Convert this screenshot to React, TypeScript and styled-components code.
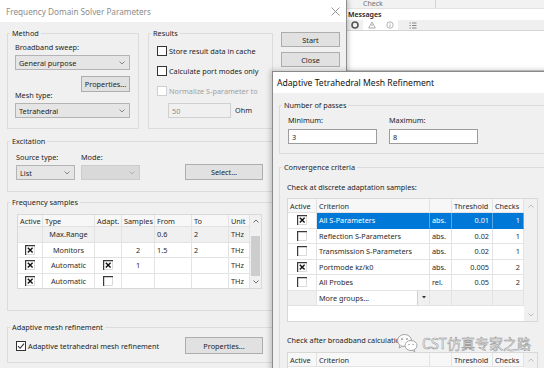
import React from "react";
import styled, { createGlobalStyle } from "styled-components";

const GlobalStyle = createGlobalStyle`
  html, body { margin: 0; padding: 0; background: #ffffff; }
  body {
    font-family: "Noto Sans", "Open Sans", "Liberation Sans", sans-serif;
    font-size: 7.3px;
    color: #1e1e1e;
  }
  *, *::before, *::after { box-sizing: border-box; }
`;

const Desktop = styled.div`
  position: relative;
  width: 544px;
  height: 368px;
  overflow: hidden;
  background: #ffffff;
`;

type WinProps = { $x: number; $y: number; $w: number; $h: number; $z: number };

const Window = styled.div<WinProps>`
  position: absolute;
  left: ${(p) => p.$x}px;
  top: ${(p) => p.$y}px;
  width: ${(p) => p.$w}px;
  height: ${(p) => p.$h}px;
  z-index: ${(p) => p.$z};
  display: flex;
  flex-direction: column;
  background: #f0f0f0;
`;

const SolverWindow = styled(Window)`
  border-right: 1px solid #8e8e8e;
  box-shadow: 2px 0 4px rgba(0, 0, 0, 0.18);
`;

const MeshWindow = styled(Window)`
  border-left: 1px solid #8a8a8a;
  border-top: 1px solid #8a8a8a;
  box-shadow: -2px -1px 5px rgba(0, 0, 0, 0.2);
`;

const MessagesWindow = styled(Window)`
  background: #ffffff;
  border-bottom: 2px solid #cfcfcf;
`;

const TitleBar = styled.div<{ $h: number; $pl: number; $pr?: number }>`
  flex: none;
  height: ${(p) => p.$h}px;
  background: #ffffff;
  display: flex;
  align-items: center;
  justify-content: space-between;
  padding: 0 ${(p) => p.$pr ?? 0}px 0 ${(p) => p.$pl}px;
`;

const TitleText = styled.span<{ $active: boolean }>`
  font-size: ${(p) => (p.$active ? 8.6 : 8.2)}px;
  color: ${(p) => (p.$active ? "#111111" : "#8c8c8c")};
  white-space: nowrap;
`;

const DialogBody = styled.div<{ $pt: number; $pl: number }>`
  flex: 1;
  display: flex;
  flex-direction: column;
  align-items: flex-start;
  padding: ${(p) => p.$pt}px 0 0 ${(p) => p.$pl}px;
`;

const Row = styled.div<{ $gap?: number; $mt?: number; $ml?: number; $align?: string; $justify?: string; $h?: number; $w?: number }>`
  display: flex;
  flex: none;
  gap: ${(p) => p.$gap ?? 0}px;
  margin-top: ${(p) => p.$mt ?? 0}px;
  margin-left: ${(p) => p.$ml ?? 0}px;
  align-items: ${(p) => p.$align ?? "flex-start"};
  justify-content: ${(p) => p.$justify ?? "flex-start"};
  ${(p) => (p.$h ? `height: ${p.$h}px;` : "")}
  ${(p) => (p.$w ? `width: ${p.$w}px;` : "")}
`;

const Column = styled.div<{ $gap?: number; $ml?: number; $align?: string }>`
  display: flex;
  flex-direction: column;
  gap: ${(p) => p.$gap ?? 0}px;
  margin-left: ${(p) => p.$ml ?? 0}px;
  align-items: ${(p) => p.$align ?? "flex-start"};
`;

const Group = styled.fieldset<{ $w: number; $mt?: number; $ml?: number; $h?: number }>`
  margin: ${(p) => p.$mt ?? 0}px 0 0 ${(p) => p.$ml ?? 0}px;
  padding: 0;
  min-width: 0;
  width: ${(p) => p.$w}px;
  ${(p) => (p.$h ? `height: ${p.$h}px;` : "")}
  border: 1px solid #dcdcdc;
  flex: none;
`;

const Legend = styled.legend`
  margin-left: 2px;
  padding: 0 2px;
  height: 12px;
  line-height: 12px;
  font-size: 7.3px;
  color: #1e1e1e;
`;

const GroupBody = styled.div<{ $pad: string }>`
  padding: ${(p) => p.$pad};
  display: flex;
  flex-direction: column;
  align-items: flex-start;
`;

const FieldLabel = styled.div<{ $mt?: number }>`
  height: 12px;
  line-height: 12px;
  margin-top: ${(p) => p.$mt ?? 0}px;
  white-space: nowrap;
`;

const ComboBox = styled.div<{ $w: number; $disabled?: boolean; $mt?: number }>`
  width: ${(p) => p.$w}px;
  height: 15px;
  margin-top: ${(p) => p.$mt ?? 2}px;
  display: flex;
  align-items: center;
  justify-content: space-between;
  padding: 0 4px 0 3px;
  background: ${(p) => (p.$disabled ? "#d9d9d9" : "#e5e5e5")};
  border: 1px solid ${(p) => (p.$disabled ? "#cccccc" : "#b4b4b4")};
  white-space: nowrap;
`;

const PushButton = styled.button<{ $w: number; $h?: number; $ml?: number }>`
  width: ${(p) => p.$w}px;
  height: ${(p) => p.$h ?? 16}px;
  margin: 0 0 0 ${(p) => p.$ml ?? 0}px;
  padding: 0;
  font: inherit;
  color: #1e1e1e;
  background: #e1e1e1;
  border: 1px solid #adadad;
  border-radius: 0;
  display: flex;
  align-items: center;
  justify-content: center;
  white-space: nowrap;
  flex: none;
`;

const ButtonColumn = styled.div<{ $ml: number }>`
  display: flex;
  flex-direction: column;
  gap: 5px;
  margin: 5px 0 0 ${(p) => p.$ml}px;
`;

const CheckRow = styled.div<{ $h: number; $w?: number }>`
  display: flex;
  align-items: center;
  gap: 2px;
  height: ${(p) => p.$h}px;
  ${(p) => (p.$w ? `width: ${p.$w}px;` : "")}
  flex: none;
`;

const Box = styled.span<{ $disabled?: boolean }>`
  width: 10px;
  height: 10px;
  flex: none;
  display: inline-flex;
  align-items: center;
  justify-content: center;
  background: #ffffff;
  border: 1px solid ${(p) => (p.$disabled ? "#cfcfcf" : "#333333")};
`;

const CheckText = styled.span<{ $disabled?: boolean }>`
  white-space: nowrap;
  color: ${(p) => (p.$disabled ? "#a0a0a0" : "#1e1e1e")};
`;

const TextField = styled.div<{ $w: number; $disabled?: boolean; $mt?: number; $ml?: number }>`
  width: ${(p) => p.$w}px;
  height: 15px;
  margin: ${(p) => p.$mt ?? 0}px 0 0 ${(p) => p.$ml ?? 0}px;
  padding-left: 3px;
  display: flex;
  align-items: center;
  background: ${(p) => (p.$disabled ? "#f0f0f0" : "#ffffff")};
  border: 1px solid ${(p) => (p.$disabled ? "#d0d0d0" : "#9c9c9c")};
  color: ${(p) => (p.$disabled ? "#8d8d8d" : "#1e1e1e")};
  flex: none;
`;

const UnitText = styled.span`
  margin-left: 4px;
  line-height: 15px;
`;

/* ---------- tables ---------- */

const TableFrame = styled.div<{ $w: number; $h: number; $mt?: number }>`
  display: flex;
  flex: none;
  width: ${(p) => p.$w}px;
  height: ${(p) => p.$h}px;
  margin-top: ${(p) => p.$mt ?? 0}px;
  border: 1px solid #d8d8d8;
  background: #ffffff;
  overflow: hidden;
`;

const DataGrid = styled.div<{ $cols: string; $head: number; $row: number }>`
  flex: 1;
  display: grid;
  grid-template-columns: ${(p) => p.$cols};
  grid-template-rows: ${(p) => p.$head}px;
  grid-auto-rows: ${(p) => p.$row}px;
  align-content: start;
`;

type Tone = "white" | "gray" | "sel" | "head";
type Align = "left" | "center" | "right";

const toneBg: Record<Tone, string> = {
  white: "#ffffff",
  gray: "#f0f0f0",
  sel: "#0078d7",
  head: "#f7f7f7",
};

const Cell = styled.div<{ $align?: Align; $tone?: Tone; $pad?: number }>`
  display: flex;
  align-items: center;
  min-width: 0;
  overflow: hidden;
  white-space: nowrap;
  justify-content: ${(p) =>
    p.$align === "center" ? "center" : p.$align === "right" ? "flex-end" : "flex-start"};
  padding: 0 ${(p) => p.$pad ?? (p.$align === "right" ? 3 : 2)}px;
  background: ${(p) => toneBg[p.$tone ?? "white"]};
  color: ${(p) => (p.$tone === "sel" ? "#ffffff" : "#2a2a2a")};
  border-right: 1px solid ${(p) => (p.$tone === "sel" ? "rgba(255,255,255,0.35)" : "#e3e3e3")};
  border-bottom: 1px solid ${(p) => (p.$tone === "sel" ? "#0078d7" : "#e3e3e3")};
`;

const ScrollTrack = styled.div<{ $w: number }>`
  flex: none;
  width: ${(p) => p.$w}px;
  background: #f0f0f0;
  display: flex;
  flex-direction: column;
`;

const ScrollButton = styled.div<{ $h: number }>`
  flex: none;
  height: ${(p) => p.$h}px;
  display: flex;
  align-items: center;
  justify-content: center;
`;

const ScrollSpace = styled.div<{ $h?: number }>`
  flex: ${(p) => (p.$h ? "none" : "1")};
  height: ${(p) => (p.$h ? `${p.$h}px` : "auto")};
`;

const ScrollThumb = styled.div<{ $h: number }>`
  flex: none;
  height: ${(p) => p.$h}px;
  margin: 0 1px;
  background: #cdcdcd;
`;

const MiniCombo = styled.div`
  flex: 1;
  display: flex;
  height: 100%;
  background: #ffffff;
`;

const MiniComboText = styled.span`
  flex: 1;
  display: flex;
  align-items: center;
  padding-left: 2px;
`;

const MiniComboButton = styled.span`
  width: 12px;
  flex: none;
  display: flex;
  align-items: center;
  justify-content: center;
  background: #f0f0f0;
  border-left: 1px solid #d0d0d0;
`;

/* ---------- background messages app ---------- */

const CheckHeader = styled.div`
  flex: none;
  height: 9px;
  display: flex;
  background: #f2f2f2;
  border-bottom: 1px solid #e2e2e2;
  overflow: hidden;
`;

const CheckCell = styled.div<{ $w: number }>`
  width: ${(p) => p.$w}px;
  padding-left: 16px;
  border-right: 1px solid #d3d3d3;
  display: flex;
  align-items: center;
  font-size: 7px;
  line-height: 8px;
  color: #707070;
`;

const PaneTitle = styled.div`
  flex: none;
  height: 11px;
  line-height: 12px;
  padding-left: 1px;
  font-size: 7px;
  font-weight: 600;
  color: #222222;
`;

const MsgToolbar = styled.div`
  flex: none;
  height: 11px;
  display: flex;
  background: #f0f0f0;
  border-bottom: 1px solid #d4d4d4;
`;

const IconSlot = styled.div<{ $w: number; $light?: boolean }>`
  width: ${(p) => p.$w}px;
  display: flex;
  align-items: center;
  justify-content: center;
  background: ${(p) => (p.$light ? "#ffffff" : "transparent")};
`;

const MsgList = styled.div`
  flex: 1;
  background: #ffffff;
`;

/* ---------- watermark ---------- */

const Watermark = styled.div`
  position: absolute;
  left: 396px;
  top: 333px;
  z-index: 20;
  display: flex;
  align-items: center;
  gap: 4px;
  pointer-events: none;
`;

const WatermarkText = styled.span`
  font-family: "Noto Sans CJK SC", "Noto Sans", sans-serif;
  font-size: 14px;
  line-height: 20px;
  color: rgba(255, 255, 255, 0.85);
  -webkit-text-stroke: 0.5px #8f8f8f;
  white-space: nowrap;
`;

/* ---------- small drawings ---------- */

const Chevron = ({ color = "#7a7a7a", up = false }: { color?: string; up?: boolean }) => (
  <svg width="6" height="4" viewBox="0 0 6 4">
    <path
      d={up ? "M0.5 3.5 L3 1 L5.5 3.5" : "M0.5 0.5 L3 3 L5.5 0.5"}
      fill="none"
      stroke={color}
      strokeWidth="0.9"
    />
  </svg>
);

const CloseGlyph = () => (
  <svg width="9" height="9" viewBox="0 0 9 9">
    <path d="M0.5 0.5 L8.5 8.5 M8.5 0.5 L0.5 8.5" stroke="#8c8c8c" strokeWidth="0.9" />
  </svg>
);

const TableCheck = ({ checked }: { checked: boolean }) => (
  <svg width="10" height="10" viewBox="0 0 10 10">
    <rect x="0" y="0" width="10" height="10" fill="#ffffff" />
    <path d="M1 9.5 H9.5 V1" stroke="#dadada" fill="none" strokeWidth="1" />
    <path d="M0.6 10 V0.6 H10" fill="none" stroke="#3a3a3a" strokeWidth="1.2" />
    {checked && <path d="M2.8 2.8 L7.6 7.6 M7.6 2.8 L2.8 7.6" stroke="#111111" strokeWidth="1.4" />}
  </svg>
);

const TickMark = () => (
  <svg width="8" height="8" viewBox="0 0 8 8">
    <path d="M1 4.2 L3.1 6.3 L7 1.6" fill="none" stroke="#333333" strokeWidth="1.1" />
  </svg>
);

const DropTriangle = () => (
  <svg width="4" height="3" viewBox="0 0 4 3">
    <path d="M0 0 H4 L2 2.5 Z" fill="#333333" />
  </svg>
);

const ErrorIcon = () => (
  <svg width="8" height="8" viewBox="0 0 8 8">
    <circle cx="4" cy="4" r="3" fill="none" stroke="#555555" strokeWidth="1.6" />
  </svg>
);

const WarnIcon = () => (
  <svg width="8" height="8" viewBox="0 0 8 8">
    <path d="M4 1 L7.3 7 H0.7 Z" fill="none" stroke="#9a9a9a" strokeWidth="0.8" />
    <path d="M4 3 V5.2 M4 5.9 V6.4" stroke="#9a9a9a" strokeWidth="0.8" />
  </svg>
);

const InfoIcon = () => (
  <svg width="8" height="8" viewBox="0 0 8 8">
    <circle cx="4" cy="4" r="3.2" fill="none" stroke="#a0a0a0" strokeWidth="0.8" />
    <path d="M4 3.4 V6 M4 2 V2.7" stroke="#a0a0a0" strokeWidth="0.8" />
  </svg>
);

const ListIcon = () => (
  <svg width="8" height="7" viewBox="0 0 8 7">
    <path d="M0.5 1 H1.8 M3 1 H7.5 M0.5 3.5 H1.8 M3 3.5 H7.5 M0.5 6 H1.8 M3 6 H7.5" stroke="#777777" strokeWidth="0.9" />
  </svg>
);

const WeChatLogo = () => (
  <svg width="22" height="20" viewBox="0 0 22 20">
    <ellipse cx="8.5" cy="7.5" rx="7" ry="6" fill="rgba(255,255,255,0.9)" stroke="#9a9a9a" strokeWidth="0.9" />
    <path d="M4 12 L3.2 15 L6.4 13.2" fill="rgba(255,255,255,0.9)" stroke="#9a9a9a" strokeWidth="0.9" />
    <circle cx="6" cy="6" r="0.9" fill="#9a9a9a" />
    <circle cx="11" cy="6" r="0.9" fill="#9a9a9a" />
    <ellipse cx="15" cy="12.5" rx="6" ry="5" fill="rgba(255,255,255,0.95)" stroke="#9a9a9a" strokeWidth="0.9" />
    <path d="M18 16.5 L18.8 18.8 L16.2 17.3" fill="rgba(255,255,255,0.95)" stroke="#9a9a9a" strokeWidth="0.9" />
    <circle cx="13" cy="11.5" r="0.75" fill="#9a9a9a" />
    <circle cx="17" cy="11.5" r="0.75" fill="#9a9a9a" />
  </svg>
);

/* ---------- data ---------- */

type CellSpec = { text?: string; align?: Align; check?: boolean; tone?: Tone };

const freqHead = ["Active", "Type", "Adapt.", "Samples", "From", "To", "Unit"];
const freqRows: CellSpec[][] = [
  [
    { tone: "gray" },
    { text: "Max.Range", align: "center", tone: "gray" },
    { tone: "gray" },
    { tone: "gray" },
    { text: "0.6", tone: "gray" },
    { text: "2", tone: "gray" },
    { text: "THz", tone: "gray" },
  ],
  [
    { check: true, align: "center" },
    { text: "Monitors", align: "center" },
    {},
    { text: "2", align: "center" },
    { text: "1.5" },
    { text: "2" },
    { text: "THz" },
  ],
  [
    { check: true, align: "center" },
    { text: "Automatic", align: "center" },
    { check: true, align: "center" },
    { text: "1", align: "center" },
    {},
    {},
    { text: "THz" },
  ],
  [
    { check: true, align: "center" },
    { text: "Automatic", align: "center" },
    { check: false, align: "center" },
    {},
    {},
    {},
    { text: "THz" },
  ],
];

const critHead = ["Active", "Criterion", "", "Threshold", "Checks"];
const critRows: { on: boolean; name: string; kind: string; thr: string; n: string; sel?: boolean }[] = [
  { on: true, name: "All S-Parameters", kind: "abs.", thr: "0.01", n: "1", sel: true },
  { on: false, name: "Reflection S-Parameters", kind: "abs.", thr: "0.02", n: "1" },
  { on: false, name: "Transmission S-Parameters", kind: "abs.", thr: "0.02", n: "1" },
  { on: true, name: "Portmode kz/k0", kind: "abs.", thr: "0.005", n: "2" },
  { on: false, name: "All Probes", kind: "rel.", thr: "0.05", n: "2" },
];

const CRIT_COLS = "29px 113px 22px 41px 31px";

const CriteriaHeader = () => (
  <>
    {critHead.map((h, i) => (
      <Cell key={i} $tone="head">
        {h}
      </Cell>
    ))}
  </>
);

export default function App() {
  return (
    <>
      <GlobalStyle />
      <Desktop>
        {/* background application: message pane */}
        <MessagesWindow $x={347} $y={0} $w={200} $h={72} $z={1}>
          <CheckHeader>
            <CheckCell $w={89}>Check</CheckCell>
          </CheckHeader>
          <PaneTitle>Messages</PaneTitle>
          <MsgToolbar>
            <IconSlot $w={16}>
              <ErrorIcon />
            </IconSlot>
            <IconSlot $w={18} $light>
              <WarnIcon />
            </IconSlot>
            <IconSlot $w={17} $light>
              <InfoIcon />
            </IconSlot>
            <IconSlot $w={30}>
              <ListIcon />
            </IconSlot>
          </MsgToolbar>
          <MsgList />
        </MessagesWindow>

        {/* Frequency Domain Solver Parameters */}
        <SolverWindow $x={0} $y={0} $w={347} $h={380} $z={2}>
          <TitleBar $h={22} $pl={6} $pr={6}>
            <TitleText $active={false}>Frequency Domain Solver Parameters</TitleText>
            <CloseGlyph />
          </TitleBar>
          <DialogBody $pt={5} $pl={7}>
            <Row>
              <Group $w={132}>
                <Legend>Method</Legend>
                <GroupBody $pad="2px 8px 10px 7px">
                  <FieldLabel>Broadband sweep:</FieldLabel>
                  <ComboBox $w={115}>
                    General purpose
                    <Chevron />
                  </ComboBox>
                  <Row $mt={6} $w={115} $justify="flex-end">
                    <PushButton $w={49}>Properties...</PushButton>
                  </Row>
                  <FieldLabel $mt={-3}>Mesh type:</FieldLabel>
                  <ComboBox $w={115}>
                    Tetrahedral
                    <Chevron />
                  </ComboBox>
                </GroupBody>
              </Group>

              <Group $w={125} $ml={9}>
                <Legend>Results</Legend>
                <GroupBody $pad="2px 6px 10px 8px">
                  <CheckRow $h={20}>
                    <Box />
                    <CheckText>Store result data in cache</CheckText>
                  </CheckRow>
                  <CheckRow $h={20}>
                    <Box />
                    <CheckText>Calculate port modes only</CheckText>
                  </CheckRow>
                  <CheckRow $h={20}>
                    <Box $disabled />
                    <CheckText $disabled>Normalize S-parameter to</CheckText>
                  </CheckRow>
                  <Row $mt={2} $align="center">
                    <TextField $w={63} $ml={11} $disabled>
                      50
                    </TextField>
                    <UnitText>Ohm</UnitText>
                  </Row>
                </GroupBody>
              </Group>

              <ButtonColumn $ml={8}>
                <PushButton $w={59} $h={15}>
                  Start
                </PushButton>
                <PushButton $w={59} $h={15}>
                  Close
                </PushButton>
              </ButtonColumn>
            </Row>

            <Group $w={333} $mt={6}>
              <Legend>Excitation</Legend>
              <GroupBody $pad="4px 0 11px 8px">
                <Row $align="flex-end">
                  <Column>
                    <FieldLabel>Source type:</FieldLabel>
                    <ComboBox $w={59}>
                      List
                      <Chevron />
                    </ComboBox>
                  </Column>
                  <Column $ml={6}>
                    <FieldLabel>Mode:</FieldLabel>
                    <ComboBox $w={59} $disabled>
                      <span />
                      <Chevron color="#b0b0b0" />
                    </ComboBox>
                  </Column>
                  <PushButton $w={78} $h={16} $ml={45}>
                    Select...
                  </PushButton>
                </Row>
              </GroupBody>
            </Group>

            <Group $w={333} $mt={4}>
              <Legend>Frequency samples</Legend>
              <GroupBody $pad="6px 0 21px 9px">
                <TableFrame $w={245} $h={75}>
                  <DataGrid $cols="25px 52px 27px 33px 37px 37px 21px" $head={12} $row={15.5}>
                    {freqHead.map((h) => (
                      <Cell key={h} $tone="head">
                        {h}
                      </Cell>
                    ))}
                    {freqRows.map((row, r) =>
                      row.map((c, i) => (
                        <Cell key={`${r}-${i}`} $align={c.align} $tone={c.tone}>
                          {c.check !== undefined ? <TableCheck checked={c.check} /> : c.text}
                        </Cell>
                      ))
                    )}
                  </DataGrid>
                  <ScrollTrack $w={11}>
                    <ScrollButton $h={12}>
                      <Chevron up color="#606060" />
                    </ScrollButton>
                    <ScrollSpace $h={9} />
                    <ScrollThumb $h={40} />
                    <ScrollSpace />
                    <ScrollButton $h={12}>
                      <Chevron color="#606060" />
                    </ScrollButton>
                  </ScrollTrack>
                </TableFrame>
              </GroupBody>
            </Group>

            <Group $w={333} $mt={10}>
              <Legend>Adaptive mesh refinement</Legend>
              <GroupBody $pad="4px 0 8px 8px">
                <Row $align="center" $h={17}>
                  <CheckRow $h={17} $w={169}>
                    <Box>
                      <TickMark />
                    </Box>
                    <CheckText>Adaptive tetrahedral mesh refinement</CheckText>
                  </CheckRow>
                  <PushButton $w={78} $h={17}>
                    Properties...
                  </PushButton>
                </Row>
              </GroupBody>
            </Group>
          </DialogBody>
        </SolverWindow>

        {/* Adaptive Tetrahedral Mesh Refinement */}
        <MeshWindow $x={272} $y={71} $w={290} $h={310} $z={3}>
          <TitleBar $h={21} $pl={4}>
            <TitleText $active>Adaptive Tetrahedral Mesh Refinement</TitleText>
          </TitleBar>
          <DialogBody $pt={6} $pl={6}>
            <Group $w={290}>
              <Legend>Number of passes</Legend>
              <GroupBody $pad="3px 0 9px 8px">
                <Row $gap={12}>
                  <Column>
                    <FieldLabel>Minimum:</FieldLabel>
                    <TextField $w={89} $mt={3}>
                      3
                    </TextField>
                  </Column>
                  <Column>
                    <FieldLabel>Maximum:</FieldLabel>
                    <TextField $w={89} $mt={3}>
                      8
                    </TextField>
                  </Column>
                </Row>
              </GroupBody>
            </Group>

            <Group $w={290} $mt={7} $h={240}>
              <Legend>Convergence criteria</Legend>
              <GroupBody $pad="8px 0 0 7px">
                <FieldLabel>Check at discrete adaptation samples:</FieldLabel>
                <TableFrame $w={251} $h={124} $mt={5}>
                  <DataGrid $cols={CRIT_COLS} $head={14} $row={15.5}>
                    <CriteriaHeader />
                    {critRows.map((r) => {
                      const tone: Tone = r.sel ? "sel" : "white";
                      return (
                        <React.Fragment key={r.name}>
                          <Cell $align="center">
                            <TableCheck checked={r.on} />
                          </Cell>
                          <Cell $tone={tone}>{r.name}</Cell>
                          <Cell $tone={tone}>{r.kind}</Cell>
                          <Cell $tone={tone} $align="right">
                            {r.thr}
                          </Cell>
                          <Cell $tone={tone} $align="right">
                            {r.n}
                          </Cell>
                        </React.Fragment>
                      );
                    })}
                    <Cell $tone="gray" />
                    <Cell $tone="gray" $pad={0}>
                      <MiniCombo>
                        <MiniComboText>More groups...</MiniComboText>
                        <MiniComboButton>
                          <DropTriangle />
                        </MiniComboButton>
                      </MiniCombo>
                    </Cell>
                    <Cell $tone="gray" />
                    <Cell $tone="gray" />
                    <Cell $tone="gray" />
                  </DataGrid>
                  <ScrollTrack $w={13}>
                    <ScrollButton $h={14}>
                      <Chevron up color="#b8b8b8" />
                    </ScrollButton>
                    <ScrollSpace />
                    <ScrollButton $h={12}>
                      <Chevron color="#b8b8b8" />
                    </ScrollButton>
                  </ScrollTrack>
                </TableFrame>

                <FieldLabel $mt={12}>Check after broadband calculation</FieldLabel>
                <TableFrame $w={251} $h={40} $mt={6}>
                  <DataGrid $cols={CRIT_COLS} $head={14} $row={15.5}>
                    <CriteriaHeader />
                  </DataGrid>
                  <ScrollTrack $w={13}>
                    <ScrollButton $h={14}>
                      <Chevron up color="#b8b8b8" />
                    </ScrollButton>
                  </ScrollTrack>
                </TableFrame>
              </GroupBody>
            </Group>
          </DialogBody>
        </MeshWindow>

        <Watermark>
          <WeChatLogo />
          <WatermarkText>CST仿真专家之路</WatermarkText>
        </Watermark>
      </Desktop>
    </>
  );
}
